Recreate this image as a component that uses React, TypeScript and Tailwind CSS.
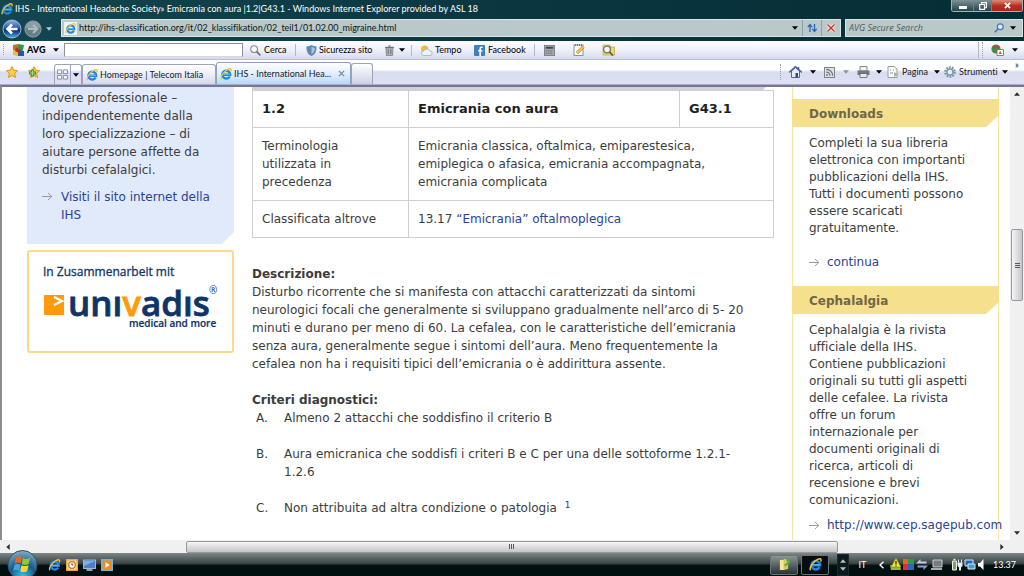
import React from "react";

const ui = "font-['Lato','Open_Sans',sans-serif] [font-variant-ligatures:none]";

function IeIcon({ className = "h-3 w-3" }: { className?: string }) {
  return (
    <svg viewBox="0 0 16 16" className={className} aria-hidden="true">
      <path d="M13 11.300A5.200 5.200 0 1 1 13.600 9H4.600" fill="none" stroke="#2187dd" strokeWidth="3.200" />
      <path d="M4.500 8.400h8.800" stroke="#6cc0f5" strokeWidth="1.300" />
      <path d="M2 15C0 13 3.400 6.800 8.200 3.300S15.600.4 14.600 4.400" fill="none" stroke="#f2c230" strokeWidth="1.800" />
    </svg>
  );
}

function Caret({ className = "text-black" }: { className?: string }) {
  return (
    <svg viewBox="0 0 6 4" className={"h-1 w-1.5 shrink-0 " + className} aria-hidden="true">
      <path d="M0 .3h6L3 3.700z" fill="currentColor" />
    </svg>
  );
}

function Grip() {
  return <span className="h-4 w-px border-l border-dotted border-[#9a9fb4]" />;
}

function LinkArrow() {
  return (
    <svg viewBox="0 0 11 9" className="mt-1 h-[9px] w-[11px] shrink-0" aria-hidden="true">
      <path d="M0 4.500h9.500M6 1l3.800 3.500L6 8" fill="none" stroke="#9a9a9a" strokeWidth="1" />
    </svg>
  );
}

function NavButtons() {
  return (
    <div className="flex w-[61px] items-center">
      <button aria-label="Indietro" className="ml-[2px] h-5 w-5">
        <svg viewBox="0 0 20 20" className="h-5 w-5">
          <defs>
            <linearGradient id="back" x1="0" y1="0" x2="0" y2="1">
              <stop offset="0" stopColor="#8fb2e6" />
              <stop offset=".5" stopColor="#1c4cab" />
              <stop offset=".55" stopColor="#08246f" />
              <stop offset="1" stopColor="#3bb5f0" />
            </linearGradient>
          </defs>
          <circle cx="10" cy="10" r="9" fill="url(#back)" stroke="#9fb8c6" strokeWidth="1" />
          <path d="M15.500 10H6M10 5.500 5.500 10l4.500 4.500" fill="none" stroke="#fff" strokeWidth="2.600" />
        </svg>
      </button>
      <button aria-label="Avanti" className="ml-[2px] h-[18px] w-[18px]">
        <svg viewBox="0 0 20 20" className="h-[18px] w-[18px]">
          <circle cx="10" cy="10" r="9" fill="#667f87" stroke="#96a8ae" strokeWidth="1" />
          <path d="M2 9a8 8 0 0 1 16 0z" fill="#8a9da3" />
          <path d="M4.500 10H14M10 5.500l4.500 4.500-4.500 4.500" fill="none" stroke="#aebbc0" strokeWidth="2.400" />
        </svg>
      </button>
      <button aria-label="Pagine recenti" className="ml-1"><Caret className="text-[#9fd4e0]" /></button>
    </div>
  );
}

function TitleBar() {
  return (
    <header className="flex h-[17px] items-center pl-px">
      <IeIcon className="h-3 w-3 shrink-0" />
      <h1 className="ml-0.5 flex-1 truncate text-[9px] leading-[14px] text-white">
        IHS - International Headache Society» Emicrania con aura |1.2|G43.1 - Windows Internet Explorer provided by ASL 18
      </h1>
      <div className="mr-px flex h-3 self-start overflow-hidden rounded-b-[3px] border border-t-0 border-[#9fb4b8]">
        <button aria-label="Riduci a icona" className="flex w-[22px] items-center justify-center border-r border-[#6b8388] bg-gradient-to-b from-[#7e9196] to-[#25444b]">
          <span className="mt-1 h-[3px] w-2 bg-white" />
        </button>
        <button aria-label="Ripristina" className="flex w-[18px] items-center justify-center border-r border-[#6b8388] bg-gradient-to-b from-[#7e9196] to-[#25444b]">
          <svg viewBox="0 0 8 8" className="h-2 w-2"><path d="M2.500 2V.7h5v5H6M.7 2.500h4.800v4.800H.7z" fill="none" stroke="#fff" strokeWidth="1.200" /></svg>
        </button>
        <button aria-label="Chiudi" className="flex w-[30px] items-center justify-center bg-gradient-to-b from-[#d58c7d] via-[#b8301c] to-[#a02a18]">
          <svg viewBox="0 0 8 8" className="h-[7px] w-[7px]"><path d="M1 1l6 6M7 1 1 7" stroke="#fff" strokeWidth="2" /></svg>
        </button>
      </div>
    </header>
  );
}

function AddressBar() {
  return (
    <div className="flex h-6 items-center">
      <NavButtons />
      <div className="mb-0.5 flex h-[18px] flex-1 items-center border border-[#dbe6e6] bg-[#b9c8c9]">
        <span className="ml-0.5 flex h-[13px] w-[13px] items-center justify-center bg-[#eef3f3]"><IeIcon className="h-[11px] w-[11px]" /></span>
        <input
          aria-label="Indirizzo"
          className="ml-[2px] min-w-0 flex-1 bg-transparent text-[9px] leading-4 text-[#0c1416] outline-none"
          defaultValue="http://ihs-classification.org/it/02_klassifikation/02_teil1/01.02.00_migraine.html"
        />
        <button aria-label="Mostra indirizzi" className="flex h-full w-[14px] items-center justify-center"><Caret /></button>
        <button aria-label="Aggiorna" className="flex h-full w-[19px] items-center justify-center border-l border-[#8da0a2]">
          <svg viewBox="0 0 12 10" className="h-[10px] w-3"><path d="M4 9V2M1.800 4.200 4 1.600l2.200 2.600" fill="none" stroke="#2c63b8" strokeWidth="1.300" /><path d="M8.500 1v7M6.300 5.800l2.200 2.600 2.200-2.600" fill="none" stroke="#2c63b8" strokeWidth="1.300" /></svg>
        </button>
        <button aria-label="Interrompi" className="flex h-full w-[19px] items-center justify-center border-l border-[#8da0a2]">
          <svg viewBox="0 0 10 10" className="h-[10px] w-[10px]"><path d="M1.500 1.500l7 7M8.500 1.500l-7 7" stroke="#fff" strokeWidth="3" /><path d="M1.500 1.500l7 7M8.500 1.500l-7 7" stroke="#c8312a" strokeWidth="1.500" /></svg>
        </button>
      </div>
      <div className="mb-0.5 ml-[4px] mr-px flex h-[18px] w-[178px] items-center border border-[#dbe6e6] bg-[#b9c8c9]">
        <input aria-label="Ricerca" placeholder="AVG Secure Search" className="ml-[3px] min-w-0 flex-1 bg-transparent font-['Open_Sans',sans-serif] text-[9px] italic outline-none placeholder:text-[#4f5c5e]" />
        <button aria-label="Cerca nel Web">
          <svg viewBox="0 0 12 12" className="h-[10px] w-[10px]"><circle cx="7.500" cy="4.500" r="3.500" fill="#dcecf7" stroke="#3f74b5" strokeWidth="1.400" /><path d="M5 7 1 11" stroke="#3f74b5" strokeWidth="1.800" /></svg>
        </button>
        <button aria-label="Opzioni di ricerca" className="flex w-[18px] justify-center"><Caret /></button>
      </div>
    </div>
  );
}

function AvgLogo() {
  return (
    <svg viewBox="0 0 12 12" className="h-3 w-3" aria-hidden="true">
      <path d="M0 1l5-1v6H0z" fill="#e06a1c" />
      <path d="M5 0l6 1-1 5H5z" fill="#2d9a45" />
      <path d="M0 6h5v6l-5-1z" fill="#e9c12e" />
      <path d="M5 5l6 2v5H5z" fill="#2657a8" />
      <path d="M3 3l4 3-1 3-4-2z" fill="#c32a22" />
    </svg>
  );
}

function AvgToolbar() {
  return (
    <nav aria-label="AVG" className="flex h-[19px] items-center overflow-hidden border-b border-[#b9bed3] bg-gradient-to-b from-white via-[#eef0fa] to-[#d6daee] text-[9px] leading-3 text-black">
      <span className="ml-[3px]"><Grip /></span>
      <button className="ml-[9px] flex w-[51px] items-center gap-[2px]">
        <AvgLogo /><b className="flex-1 text-left text-[9px] font-black">AVG</b><Caret className="mr-[5px] text-black" />
      </button>
      <input aria-label="Cerca con AVG" className="h-[14px] w-[179px] border border-[#8c8f9c] border-b-[#d5d8e2] bg-white px-1 outline-none" />
      <button className="flex w-[53px] items-center gap-[3px] border-r border-[#b3b7c6] pl-[7px]">
        <svg viewBox="0 0 12 12" className="h-[11px] w-[11px]"><circle cx="4.500" cy="4.500" r="3.700" fill="#f5f9fc" stroke="#8b8e95" strokeWidth="1.200" /><path d="M7.300 7.300l4 4" stroke="#6c6f76" strokeWidth="1.800" /></svg>
        Cerca
      </button>
      <button className="ml-[10px] flex w-[79px] items-center gap-[2px] whitespace-nowrap">
        <svg viewBox="0 0 12 12" className="h-[11px] w-[11px] shrink-0"><path d="M6 0c2 1.200 3.500 1.500 5.500 1.500 0 5-1 8.500-5.500 10.500C1.500 10 .5 6.500.5 1.500 2.500 1.500 4 1.200 6 0z" fill="#5d87b4" /><path d="M6 2c1.200.8 2.500 1 3.700 1 0 3-1 5.500-3.700 7z" fill="#a8c8e4" /></svg>
        Sicurezza sito
      </button>
      <button aria-label="Svuota" className="flex w-[27px] items-center gap-[5px] border-r border-[#b3b7c6]">
        <svg viewBox="0 0 10 12" className="h-[11px] w-[9px]"><path d="M1 3h8l-.6 8.500H1.600z" fill="#b9bcc2" stroke="#6c6f76" strokeWidth=".8" /><path d="M0 2.500h10M3.500 1h3M3.500 4.500v5.500M6.500 4.500v5.500" stroke="#5c5f66" strokeWidth="1" /></svg>
        <Caret />
      </button>
      <button className="ml-[8px] flex w-[54px] items-center gap-[2px]">
        <svg viewBox="0 0 14 12" className="h-[11px] w-[13px]"><circle cx="5" cy="4.500" r="4" fill="#f2bd34" /><path d="M4 11.500a2.500 2.500 0 0 1 0-5 3.500 3.500 0 0 1 6.500 0 2.500 2.500 0 0 1 .5 5z" fill="#eef3f8" stroke="#9aa9bb" strokeWidth=".8" /></svg>
        Tempo
      </button>
      <button className="flex w-[61px] items-center gap-[3px] border-r border-[#b3b7c6]">
        <svg viewBox="0 0 12 12" className="h-[11px] w-[11px] shrink-0"><rect width="12" height="12" rx="1" fill="#3f7ec4" /><path d="M9.500 2.500H8.300C7 2.500 6.700 3.200 6.700 4.200V12M4.500 6.200h4.700" fill="none" stroke="#fff" strokeWidth="1.700" /></svg>
        Facebook
      </button>
      <button aria-label="Calcolatrice" className="ml-[9px]">
        <svg viewBox="0 0 12 12" className="h-[11px] w-[11px]"><rect x=".5" y=".5" width="11" height="11" fill="#a6a9ae" stroke="#7b7e84" /><path d="M2 3h8" stroke="#3e4146" strokeWidth="2" /><path d="M2 6.500h8M2 9h8" stroke="#63666c" strokeWidth="1.200" strokeDasharray="1.500 1" /></svg>
      </button>
      <button aria-label="Blocco note" className="ml-[18px]">
        <svg viewBox="0 0 12 12" className="h-3 w-3"><rect x="1" y="1" width="9" height="10.500" fill="#fff" stroke="#8d9097" /><path d="M2 1h7" stroke="#5c5f66" strokeDasharray="1 1" strokeWidth="1.500" /><path d="M4 9l6.500-6.500" stroke="#c96a24" strokeWidth="3" /><path d="M4 9l6.500-6.500" stroke="#f6c548" strokeWidth="1.800" /></svg>
      </button>
      <button aria-label="Esplora" className="ml-[17px]">
        <svg viewBox="0 0 13 12" className="h-3 w-[13px]"><path d="M1 1h7l1 2h3.500v8H1z" fill="#f0dc50" stroke="#bfa63a" strokeWidth=".7" /><circle cx="5" cy="5.500" r="3.400" fill="#f3f6f8" stroke="#6c6f76" strokeWidth="1.300" /><path d="M7.500 8l3.500 3.500" stroke="#55585e" strokeWidth="1.700" /></svg>
      </button>
      <div className="ml-auto flex items-center border-l border-[#b3b7c6] pl-[3px]">
        <Grip />
        <button aria-label="Stato protezione" className="ml-2 flex w-[33px] items-center gap-2">
          <svg viewBox="0 0 13 12" className="h-3 w-[13px]"><circle cx="5" cy="5" r="4.600" fill="#3b9147" /><path d="M1 3c2-2 5-2 8 0L6 5z" fill="#c5463b" /><path d="M6 5.500h6.500v6H6z" fill="#fff" stroke="#c5463b" strokeWidth=".8" /><path d="M7.500 10l1.700-3 1.800 3z" fill="#e05246" /></svg>
          <Caret />
        </button>
      </div>
    </nav>
  );
}

function StarIcon({ plus = false }: { plus?: boolean }) {
  return (
    <svg viewBox="0 0 12 12" className="h-3 w-3" aria-hidden="true">
      <path d="M6 .6l1.700 3.600 3.900.5-2.900 2.700.8 4L6 9.500l-3.500 1.900.8-4L.4 4.700l3.900-.5z" fill="#fbd03c" stroke="#dd8a1b" strokeWidth=".9" />
      {plus && <path d="M4.500 3.500v7M1 7h7" stroke="#2f9a35" strokeWidth="2.800" />}
      {plus && <path d="M4.500 4.500v5M2 7h5" stroke="#a5e08f" strokeWidth="1" />}
    </svg>
  );
}

function TabBar() {
  return (
    <nav aria-label="Schede" className="flex h-[25px] items-end border-b border-[#a9aec6] bg-gradient-to-b from-white from-40% via-[#d9ddf0] via-50% to-[#dde1f3] text-[9px] leading-3 text-[#15191f]">
      <div className="flex h-full w-[54px] items-center gap-[10px] pl-[6px]">
        <button aria-label="Preferiti"><StarIcon /></button>
        <button aria-label="Aggiungi a Preferiti"><StarIcon plus /></button>
      </div>
      <button aria-label="Schede rapide" className="flex h-5 w-[17px] items-center justify-center rounded-tl-[3px] border border-b-0 border-[#9ea3b8]">
        <svg viewBox="0 0 12 12" className="h-[11px] w-[11px]"><path d="M.6 1h4.500v4H.6zM6.900 1h4.500v4H6.900zM.6 7h4.500v4H.6zM6.900 7h4.500v4H6.900z" fill="#f5f6fb" stroke="#83889b" /></svg>
      </button>
      <button aria-label="Elenco schede" className="flex h-5 w-[11px] items-center justify-center rounded-tr-[3px] border-r border-t border-[#9ea3b8]"><Caret /></button>
      <button className="flex h-5 w-[134px] items-center gap-[2px] whitespace-nowrap rounded-t-[3px] border border-b-0 border-[#9ea3b8] bg-gradient-to-b from-white via-[#eceef7] to-[#d5d8e8] pl-[3px]">
        <IeIcon className="h-3 w-3 shrink-0" />Homepage | Telecom Italia
      </button>
      <div className="flex h-[22px] w-[135px] items-center whitespace-nowrap rounded-t-[3px] border border-b-0 border-[#8fa0c0] bg-gradient-to-b from-white via-[#e3eefc] to-[#b9d8f8] pl-[3px] pr-[5px]">
        <button className="flex flex-1 items-center gap-[2px]"><IeIcon className="h-3 w-3 shrink-0" />IHS - International Hea...</button>
        <button aria-label="Chiudi scheda"><svg viewBox="0 0 8 8" className="h-[7px] w-[7px]"><path d="M1 1l6 6M7 1 1 7" stroke="#85888e" strokeWidth="1.600" /></svg></button>
      </div>
      <button aria-label="Nuova scheda" className="h-[21px] w-[22px] rounded-t-[3px] border border-b-0 border-[#9ea3b8] bg-gradient-to-b from-white to-[#cdd1e6]" />
      <div className="ml-auto flex h-full items-center">
        <Grip />
        <button aria-label="Pagina iniziale" className="ml-[8px] flex w-[35px] items-center gap-2">
          <svg viewBox="0 0 13 12" className="h-3 w-[13px]"><path d="M2.500 5v6.500h8V5L6.500 1.500z" fill="#e5ecf8" stroke="#44598b" strokeWidth=".9" /><path d="M0 6.500 6.500.7 13 6.500" fill="none" stroke="#4a669f" strokeWidth="1.600" /><path d="M6.500 7h2.500v4.500H6.500z" fill="#2d4a91" /><path d="M9.500 1v2.500" stroke="#44598b" strokeWidth="1.400" /></svg>
          <Caret />
        </button>
        <button aria-label="Feed" className="flex w-[33px] items-center gap-2">
          <svg viewBox="0 0 12 12" className="h-[11px] w-[11px]"><rect x=".5" y=".5" width="11" height="11" fill="#dfe1e5" stroke="#777b84" /><path d="M2.500 5.500a4 4 0 0 1 4 4M2.500 2.500a7 7 0 0 1 7 7" fill="none" stroke="#6b6e75" strokeWidth="1.300" /><circle cx="3.300" cy="8.700" r="1" fill="#6b6e75" /></svg>
          <Caret className="text-[#8d9097]" />
        </button>
        <button aria-label="Stampa" className="flex w-[30px] items-center gap-[6px]">
          <svg viewBox="0 0 13 12" className="h-3 w-[13px]"><path d="M3 .5h7V5H3z" fill="#f3f4f7" stroke="#6b6e75" strokeWidth=".8" /><path d="M.5 4.500h12V9H.5z" fill="#74777e" /><path d="M3 7.500h7v4H3z" fill="#e7e9ee" stroke="#5c5f66" strokeWidth=".8" /></svg>
          <Caret />
        </button>
        <button className="flex w-[57px] items-center gap-[3px]">
          <svg viewBox="0 0 12 12" className="h-3 w-3 shrink-0"><path d="M1 .5h6L10 3v8.500H1z" fill="#fafbfd" stroke="#8d9097" strokeWidth=".9" /><path d="M3 4h1M6 4h1M3 7h3" stroke="#83889b" strokeWidth="1" /><path d="M7 6l4.500 2.500L7 11z" fill="#a4bb99" /></svg>
          <span className="flex-1 text-left">Pagina</span><Caret className="mr-1 text-black" />
        </button>
        <button className="flex w-[66px] items-center gap-[3px]">
          <svg viewBox="0 0 12 12" className="h-3 w-3 shrink-0"><circle cx="6" cy="6" r="4.500" fill="none" stroke="#7d98ae" strokeWidth="2.600" strokeDasharray="1.800 1" /><circle cx="6" cy="6" r="3" fill="#e6eef5" stroke="#7d98ae" strokeWidth="1.300" /></svg>
          <span className="flex-1 text-left">Strumenti</span><Caret className="mr-0.5 text-black" />
        </button>
        <button aria-label="Altri comandi" className="w-[14px] self-start text-center text-[9px] leading-[10px]">»</button>
      </div>
    </nav>
  );
}

function LeftColumn() {
  return (
    <aside className="w-[207px] shrink-0">
      <div className="h-[157px] bg-[#e1eafb] pl-[15px] pt-[2px] [clip-path:polygon(0_0,100%_0,100%_calc(100%-12px),calc(100%-12px)_100%,0_100%)]">
        <p>
          dovere professionale –<br />indipendentemente dalla<br />loro specializzazione – di<br />aiutare persone affette da<br />disturbi cefalalgici.
        </p>
        <a href="#ihs" className="mt-[9px] flex gap-2 whitespace-nowrap text-[#2a4396]">
          <LinkArrow />
          <span>Visiti il sito internet della<br />IHS</span>
        </a>
      </div>
      <div className="mt-[6px] rounded-[3px] border-2 border-[#fad88c] bg-white">
        <svg viewBox="0 0 203 99" className="h-[99px] w-[203px]" role="img" aria-label="univadis">
          <g fill="#0f3468">
            <text x="14" y="24" fontFamily="Open Sans" fontSize="12" stroke="#0f3468" strokeWidth=".3">In Zusammenarbeit mit</text>
            <text x="39" y="64" fontFamily="Open Sans" fontSize="35" fontWeight="600" stroke="#0f3468" strokeWidth=".8">unı<tspan fill="#ff9a0b" stroke="#ff9a0b">v</tspan>adıs</text>
            <text x="100" y="75" fontFamily="Open Sans" fontSize="10" fontWeight="600" stroke="#0f3468" strokeWidth=".2">medical and more</text>
            <text x="180" y="42" fontFamily="Open Sans" fontSize="10">®</text>
          </g>
          <path d="M15 43h20v20H15z" fill="#ff9a0b" />
          <path d="M25 45l8 4-8 4" fill="none" stroke="#fff" strokeWidth="2.200" />
        </svg>
      </div>
    </aside>
  );
}

function MainColumn() {
  const cell = "border border-[#cfcfcf] px-[9px] align-middle";
  return (
    <main className="ml-[18px] w-[522px] shrink-0">
      <div className="h-[3px] bg-[#d0d0d8] [clip-path:polygon(0_0,calc(100%-8px)_0,calc(100%-11px)_100%,0_100%)]" />
      <table className="w-full table-fixed border-collapse text-left">
        <colgroup>
          <col className="w-[156px]" />
          <col />
          <col className="w-[94px]" />
        </colgroup>
        <tbody>
          <tr className="h-[37px] text-[13px] text-[#1f1f1f]">
            <th className={cell}>1.2</th>
            <th className={cell}>Emicrania con aura</th>
            <th className={cell}>G43.1</th>
          </tr>
          <tr className="h-[73px]">
            <td className={cell}>Terminologia<br />utilizzata in<br />precedenza</td>
            <td className={cell} colSpan={2}>
              Emicrania classica, oftalmica, emiparestesica,<br />emiplegica o afasica, emicrania accompagnata,<br />emicrania complicata
            </td>
          </tr>
          <tr className="h-[37px]">
            <td className={cell}>Classificata altrove</td>
            <td className={cell} colSpan={2}>13.17 <a href="#oftalmoplegica" className="text-[#2a4396]">“Emicrania” oftalmoplegica</a></td>
          </tr>
        </tbody>
      </table>
      <section className="mt-[27px] whitespace-nowrap">
        <h2 className="font-bold">Descrizione:</h2>
        <p>
          Disturbo ricorrente che si manifesta con attacchi caratterizzati da sintomi<br />
          neurologici focali che generalmente si sviluppano gradualmente nell’arco di 5- 20<br />
          minuti e durano per meno di 60. La cefalea, con le caratteristiche dell’emicrania<br />
          senza aura, generalmente segue i sintomi dell’aura. Meno frequentemente la<br />
          cefalea non ha i requisiti tipici dell’emicrania o è addirittura assente.
        </p>
      </section>
      <section className="mt-[18px] whitespace-nowrap">
        <h2 className="font-bold">Criteri diagnostici:</h2>
        <ol className="space-y-[18px]">
          <li className="flex"><span className="w-8 pl-1">A.</span><p>Almeno 2 attacchi che soddisfino il criterio B</p></li>
          <li className="flex"><span className="w-8 pl-1">B.</span><p>Aura emicranica che soddisfi i criteri B e C per una delle sottoforme 1.2.1-<br />1.2.6</p></li>
          <li className="flex"><span className="w-8 pl-1">C.</span><p>Non attribuita ad altra condizione o patologia <sup className="ml-1 text-[9px] leading-none">1</sup></p></li>
        </ol>
      </section>
    </main>
  );
}

function SideHeading({ children }: { children: React.ReactNode }) {
  return (
    <h2 className="-mx-px h-7 bg-[#f5e08d] pl-[17px] font-bold leading-[30px] text-[#6f6745] [clip-path:polygon(0_0,100%_0,100%_calc(100%-12px),calc(100%-13px)_100%,0_100%)]">
      {children}
    </h2>
  );
}

function RightColumn() {
  return (
    <aside className="ml-[18px] w-[207px] shrink-0 self-stretch whitespace-nowrap border-x border-[#f5e3a0] pt-3 leading-[17px]">
      <SideHeading>Downloads</SideHeading>
      <p className="pl-4 pt-2">
        Completi la sua libreria<br />elettronica con importanti<br />pubblicazioni della IHS.<br />Tutti i documenti possono<br />essere scaricati<br />gratuitamente.
      </p>
      <a href="#continua" className="mb-[15px] ml-4 mt-[17px] flex gap-[7px] text-[#2a4396]"><LinkArrow />continua</a>
      <SideHeading>Cephalalgia</SideHeading>
      <p className="pl-4 pt-2">
        Cephalalgia è la rivista<br />ufficiale della IHS.<br />Contiene pubblicazioni<br />originali su tutti gli aspetti<br />delle cefalee. La rivista<br />offre un forum<br />internazionale per<br />documenti originali di<br />ricerca, articoli di<br />recensione e brevi<br />comunicazioni.
      </p>
      <a href="http://www.cep.sagepub.com" className="ml-4 mt-2 flex gap-[7px] text-[#2a4396]"><LinkArrow />http://www.cep.sagepub.com</a>
    </aside>
  );
}

function VerticalScrollbar() {
  return (
    <div className="flex w-[14px] shrink-0 flex-col items-center bg-[#f0f0f1]">
      <button aria-label="Scorri su" className="flex h-[14px] items-center"><Caret className="rotate-180 text-[#2c2c2c]" /></button>
      <div className="grow-[128]" />
      <div className="flex h-[72px] w-3 flex-col items-center justify-center gap-px rounded-[2px] border border-[#96989c] bg-gradient-to-r from-[#f6f6f6] to-[#c4c5c8]">
        <i className="h-px w-[5px] bg-[#55585e]" /><i className="h-px w-[5px] bg-[#55585e]" /><i className="h-px w-[5px] bg-[#55585e]" />
      </div>
      <div className="grow-[224]" />
      <button aria-label="Scorri giù" className="flex h-[14px] items-center"><Caret className="text-[#2c2c2c]" /></button>
    </div>
  );
}

function HorizontalScrollbar() {
  return (
    <div className="flex h-[13px] items-center bg-[#f0f0f1] pr-[14px]">
      <button aria-label="Scorri a sinistra" className="flex w-4 justify-center"><Caret className="rotate-90 text-[#2c2c2c]" /></button>
      <div className="grow-[170] basis-0" />
      <div className="flex h-3 grow-[652] basis-0 items-center justify-center gap-px rounded-[2px] border border-[#96989c] bg-gradient-to-b from-[#f6f6f6] to-[#c4c5c8]">
        <i className="h-[5px] w-px bg-[#55585e]" /><i className="h-[5px] w-px bg-[#55585e]" /><i className="h-[5px] w-px bg-[#55585e]" />
      </div>
      <div className="grow-[156] basis-0" />
      <button aria-label="Scorri a destra" className="flex w-4 justify-center"><Caret className="-rotate-90 text-[#2c2c2c]" /></button>
    </div>
  );
}

function Taskbar() {
  return (
    <footer className="flex h-[23px] shrink-0 items-center bg-gradient-to-b from-[#7d8787] via-[#3b4546] via-45% to-[#020f11] to-55% text-[9px] leading-3 text-white">
      <button aria-label="Start" className="-mt-1 ml-[7px] h-[27px] w-[31px] self-start">
        <svg viewBox="0 0 31 27" className="h-[27px] w-[31px]">
          <defs>
            <radialGradient id="orb" cx=".5" cy=".9" r=".9">
              <stop offset="0" stopColor="#35c4ee" />
              <stop offset=".5" stopColor="#17598b" />
              <stop offset="1" stopColor="#88aebf" />
            </radialGradient>
          </defs>
          <circle cx="15.500" cy="16" r="14.500" fill="url(#orb)" stroke="#31505d" />
          <path d="M9 8.500c2-1.300 4-1.300 6 0l-1.300 6c-2-1.200-4-1.200-6 0z" fill="#e8622c" />
          <path d="M16 9c2 1.200 4.500 1.200 7 0l-1.300 6c-2.500 1.200-5 1.200-7 0z" fill="#8cc63e" />
          <path d="M7.500 15.700c2-1.200 4-1.200 6 0l-1.300 6c-2-1.200-4-1.200-6 0z" fill="#47a2e4" />
          <path d="M14.500 16.200c2 1.200 4.500 1.200 7 0l-1.300 6c-2.500 1.200-5 1.200-7 0z" fill="#fbd13c" />
        </svg>
      </button>
      <div className="ml-[10px] flex items-center gap-[5px]">
        <button aria-label="Internet Explorer"><IeIcon className="h-3 w-[13px]" /></button>
        <button aria-label="Outlook"><svg viewBox="0 0 12 12" className="h-3 w-3"><rect width="12" height="12" fill="#e5a94b" /><rect x="1.500" y="1.500" width="9" height="9" fill="#f8e2b0" /><circle cx="6" cy="6" r="3.300" fill="#fff" stroke="#c67a24" strokeWidth="1.300" /><path d="M6 4v2h1.500" fill="none" stroke="#7c4a14" /></svg></button>
        <button aria-label="Mostra desktop"><svg viewBox="0 0 13 12" className="h-3 w-[13px]"><rect x=".5" y="1" width="12" height="8.500" fill="#4d7ec8" stroke="#9db4d4" /><path d="M1 2h11L1 7z" fill="#82abe2" /><path d="M3.500 11h6" stroke="#c6cdd4" strokeWidth="1.500" /></svg></button>
        <button aria-label="Media Player"><svg viewBox="0 0 12 12" className="h-3 w-3"><rect width="12" height="12" fill="#6fb3de" /><rect x="1.500" y="1.500" width="9" height="9" rx="1" fill="#f08c1e" /><path d="M4.500 3l4 3-4 3z" fill="#fff" /></svg></button>
      </div>
      <div className="ml-auto flex items-center">
        <button aria-label="Esplora risorse" className="flex h-5 w-7 items-center justify-center rounded-[2px] border border-[#6a7475] bg-gradient-to-b from-[#8d9697] to-[#2b3537]">
          <svg viewBox="0 0 12 14" className="h-[13px] w-[11px]"><path d="M1 2h5v11H1z" fill="#f5e69a" /><path d="M5 1h5v11l-5 1z" fill="#dcc364" /><path d="M8 1l3 3-3 3M6 8l4-2" fill="none" stroke="#45b83a" strokeWidth="2" /></svg>
        </button>
        <button aria-label="IHS" className="ml-[3px] flex h-5 w-7 items-center justify-center rounded-[2px] border border-[#6a7475] bg-[#070d10]"><IeIcon className="h-[13px] w-[13px]" /></button>
        <button aria-label="Altre finestre" className="ml-[8px] flex h-[22px] w-3 flex-col items-center justify-between border border-[#1e292c] bg-[#0d1a20] py-1"><Caret className="rotate-180 text-[#b8c1c3]" /><Caret className="text-[#b8c1c3]" /></button>
        <button className="ml-[9px] w-[9px] text-[9px]">IT</button>
        <button aria-label="Mostra icone nascoste" className="ml-[12px] w-2"><svg viewBox="0 0 5 8" className="h-2 w-[5px]"><path d="M4.500.7 1 4l3.500 3.300" fill="none" stroke="#fff" strokeWidth="1.400" /></svg></button>
        <svg viewBox="0 0 53 13" className="ml-[3px] h-[13px] w-[53px]" aria-hidden="true">
          <path d="M0 7h10l1 5H1z" fill="#8cb84e" /><path d="M6 0l5 9H1z" fill="#f8dd38" stroke="#8b791a" strokeWidth=".5" /><path d="M6 3v3.500M6 7.500v1" stroke="#222" strokeWidth="1.200" />
          <path d="M13 1h5v5h-5z" fill="#e06a1c" /><path d="M18 1h6v5h-6z" fill="#2d9a45" /><path d="M13 6h5v6h-5z" fill="#d73427" /><path d="M18 6h6v6h-6z" fill="#2e66bb" />
          <path d="M26 5.500 30.500 1v2.500h6v2z" fill="#c3cdea" /><path d="M38 7.500 33.500 12V9.500h-6v-2z" fill="#8f9fd6" />
          <path d="M43 2h9v7h-9z" fill="#777c83" stroke="#c8ccd0" /><path d="M41 11h11" stroke="#dde0e3" strokeWidth="1.500" />
        </svg>
        <svg viewBox="0 0 34 13" className="ml-2 h-[13px] w-[34px]" aria-hidden="true">
          <path d="M1.500 3h4v9h-4z" fill="#79a85c" stroke="#eef3ea" /><path d="M2.500 1.500h2" stroke="#eef3ea" strokeWidth="1.400" /><path d="M7.500 1.500v3M10.500 1.500v3" stroke="#e8edf0" /><path d="M6.500 4.500h5V8L10 9.500v3H8v-3L6.500 8z" fill="#e8edf0" />
          <path d="M14 2h8v6h-8z" fill="#2766b6" stroke="#dbe6f0" /><path d="M17 6h7v5h-7z" fill="#38a2d8" stroke="#dbe6f0" />
          <path d="M27 5h2l3.500-4v11L29 8.500h-2z" fill="#fff" />
        </svg>
        <time className="ml-[8px] w-[31px] text-[9px]">13.37</time>
      </div>
    </footer>
  );
}

export default function App() {
  return (
    <div className={"flex h-screen flex-col overflow-hidden bg-gradient-to-r from-[#124650] via-[#0b3640] to-[#052d35] " + ui}>
      <TitleBar />
      <AddressBar />
      <AvgToolbar />
      <TabBar />
      <div className="flex min-h-0 flex-1 border-l-2 border-t-2 border-l-[#8c8c92] border-t-[#74779a] bg-white">
        <div className="flex min-w-0 flex-1 items-start overflow-hidden pl-[25px] font-['DejaVu_Sans','Verdana',sans-serif] text-[12px] leading-[18px] text-[#3c3c3c]">
          <LeftColumn />
          <MainColumn />
          <RightColumn />
        </div>
        <VerticalScrollbar />
      </div>
      <HorizontalScrollbar />
      <Taskbar />
    </div>
  );
}
